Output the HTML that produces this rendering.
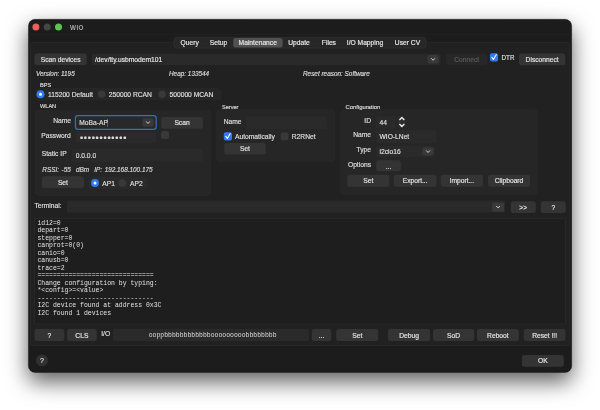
<!DOCTYPE html>
<html><head><meta charset="utf-8"><title>WIO</title>
<style>
html,body{margin:0;padding:0;background:#fff;}
body{width:600px;height:410px;position:relative;overflow:hidden;font-family:"Liberation Sans",sans-serif;font-size:6.7px;color:#dcdcdc;}
.a{position:absolute;box-sizing:border-box;white-space:nowrap;-webkit-text-stroke:0.18px currentColor;}
.bt{text-align:center;color:#e2e2e2;line-height:10px;}
.lbl{color:#dedede;}
.sm{font-size:5.6px;color:#d8d8d8;}
.it{font-style:italic;font-size:6.4px;color:#d8d8d8;}
.mono{font-family:"Liberation Mono",monospace;font-size:6.46px;color:#e2e2e2;-webkit-text-stroke:0;}
</style></head><body>
<div id="root" class="a" style="left:0;top:0;width:600px;height:410px;will-change:transform;">
<div class="a" style="left:30px;top:21px;width:540px;height:350px;border-radius:5px;background:#1c1c1c;box-shadow:0 9px 21px 2px rgba(0,0,0,.62);"></div>
<svg class="a" style="left:0;top:0" width="600" height="410" viewBox="0 0 600 410">
<rect x="28.4" y="19.3" width="543.3" height="353.1" rx="6.5" fill="#1c1c1c" stroke="rgba(0,0,0,0.55)" stroke-width="0.6"/>
<rect x="28.3" y="34" width="543.5" height="0.7" rx="0" fill="#232323"/>
<circle cx="35.9" cy="27.1" r="3.5" fill="#ec5f5a"/>
<circle cx="47.2" cy="27.1" r="3.5" fill="#464646"/>
<circle cx="58.5" cy="27.1" r="3.5" fill="#5ec353"/>
<rect x="30.5" y="42.3" width="539" height="303.2" rx="3" fill="#212121" stroke="#2f2f2f" stroke-width="0.6"/>
<rect x="174" y="37.2" width="252" height="10.9" rx="3" fill="#272727" stroke="#383838" stroke-width="0.5"/>
<rect x="233.2" y="38" width="49.5" height="9.6" rx="2.5" fill="#515151"/>
<rect x="34.5" y="53.4" width="52.25" height="11.7" rx="2.5" fill="#343434"/>
<rect x="92" y="53.8" width="348.5" height="11.1" rx="1.5" fill="#2a2a2a"/>
<rect x="427.6" y="55" width="11" height="8.4" rx="2" fill="#393939"/>
<path d="M431.5 58.55 L433.1 60.25 L434.7 58.55" fill="none" stroke="#e0e0e0" stroke-width="0.9" stroke-linecap="round" stroke-linejoin="round"/>
<rect x="446" y="53.5" width="41.5" height="11.7" rx="2.5" fill="#272727"/>
<rect x="489.9" y="53.2" width="8.2" height="8.2" rx="2" fill="#2f7bf6"/>
<path d="M491.9 57.4 L493.4 59.5 L496.25 54.7" fill="none" stroke="#fff" stroke-width="1.1" stroke-linecap="round" stroke-linejoin="round"/>
<rect x="519" y="53.5" width="46.3" height="11.7" rx="2.5" fill="#343434"/>
<rect x="35.5" y="88.5" width="185.5" height="11.5" rx="4" fill="#262626" stroke="#2b2b2b" stroke-width="0.5"/>
<circle cx="40.5" cy="94.25" r="3.95" fill="#2f7bf6"/><circle cx="40.5" cy="94.25" r="1.5" fill="#fff"/>
<circle cx="101.75" cy="94.25" r="3.8" fill="#393939"/>
<circle cx="162" cy="94.25" r="3.8" fill="#393939"/>
<rect x="35" y="110" width="176" height="85.7" rx="4" fill="#262626" stroke="#2b2b2b" stroke-width="0.5"/>
<rect x="74.8" y="115" width="82" height="14.9" rx="3.2" fill="#3470b8"/>
<rect x="76.05" y="116.25" width="79.5" height="12.4" rx="2" fill="#292929"/>
<rect x="107.1" y="118.9" width="0.7" height="7.8" rx="0" fill="#3f86f7"/>
<rect x="142.4" y="118.3" width="11.2" height="8.5" rx="2" fill="#393939"/>
<path d="M146.4 121.75 L148 123.45 L149.6 121.75" fill="none" stroke="#e0e0e0" stroke-width="0.9" stroke-linecap="round" stroke-linejoin="round"/>
<rect x="161.1" y="117.1" width="41.9" height="11.7" rx="2.5" fill="#343434"/>
<rect x="75.7" y="131.7" width="80.3" height="11.6" rx="1.5" fill="#2a2a2a"/>
<rect x="161" y="131" width="8" height="8" rx="2" fill="#393939"/>
<rect x="71.7" y="149" width="131" height="12.7" rx="1.5" fill="#2a2a2a"/>
<rect x="41.9" y="176.2" width="42.1" height="11.8" rx="2.5" fill="#343434"/>
<rect x="88.3" y="176.7" width="59.4" height="12.3" rx="4" fill="#2a2a2a" stroke="#2b2b2b" stroke-width="0.5"/>
<circle cx="95" cy="183" r="3.95" fill="#2f7bf6"/><circle cx="95" cy="183" r="1.5" fill="#fff"/>
<circle cx="122.3" cy="183" r="3.8" fill="#393939"/>
<rect x="216.25" y="109.5" width="118.75" height="52.5" rx="4" fill="#262626" stroke="#2b2b2b" stroke-width="0.5"/>
<rect x="246.25" y="116.25" width="80.5" height="13" rx="1.5" fill="#2a2a2a"/>
<rect x="223.8" y="132.2" width="8.2" height="8.2" rx="2" fill="#2f7bf6"/>
<path d="M225.8 136.4 L227.3 138.5 L230.15 133.7" fill="none" stroke="#fff" stroke-width="1.1" stroke-linecap="round" stroke-linejoin="round"/>
<rect x="280.7" y="132.4" width="7.8" height="7.8" rx="2" fill="#393939"/>
<rect x="224.2" y="142.9" width="41.55" height="11.7" rx="2.5" fill="#343434"/>
<rect x="340.25" y="109.7" width="197.75" height="84.7" rx="4" fill="#262626" stroke="#2b2b2b" stroke-width="0.5"/>
<rect x="376.3" y="116.3" width="19.7" height="12.4" rx="1.5" fill="#2a2a2a"/>
<rect x="398" y="115.8" width="7.7" height="12.2" rx="2.5" fill="#2c2c2c"/>
<path d="M399.7 119.7 L401.85 117.5 L404 119.7" fill="none" stroke="#f2f2f2" stroke-width="1.25" stroke-linecap="round" stroke-linejoin="round"/>
<path d="M399.7 124.3 L401.85 126.5 L404 124.3" fill="none" stroke="#f2f2f2" stroke-width="1.25" stroke-linecap="round" stroke-linejoin="round"/>
<rect x="376.3" y="130" width="60.2" height="13" rx="1.5" fill="#2a2a2a"/>
<rect x="376.3" y="145.75" width="58.45" height="11.55" rx="1.5" fill="#2a2a2a"/>
<rect x="422.5" y="147.5" width="11.2" height="8" rx="2" fill="#393939"/>
<path d="M426.5 150.75 L428.1 152.45 L429.7 150.75" fill="none" stroke="#e0e0e0" stroke-width="0.9" stroke-linecap="round" stroke-linejoin="round"/>
<rect x="376.3" y="160.2" width="24.5" height="11.1" rx="2.5" fill="#343434"/>
<rect x="347.25" y="174.8" width="42" height="11.9" rx="2.5" fill="#343434"/>
<rect x="393.8" y="174.8" width="42.7" height="11.9" rx="2.5" fill="#343434"/>
<rect x="440.7" y="174.8" width="42.3" height="11.9" rx="2.5" fill="#343434"/>
<rect x="488" y="174.8" width="42" height="11.9" rx="2.5" fill="#343434"/>
<rect x="67" y="200.5" width="438" height="12" rx="1.5" fill="#2a2a2a"/>
<rect x="492" y="202.5" width="12.25" height="9.25" rx="2" fill="#393939"/>
<path d="M496.5 206.25 L498.1 207.95 L499.7 206.25" fill="none" stroke="#e0e0e0" stroke-width="0.9" stroke-linecap="round" stroke-linejoin="round"/>
<rect x="510.75" y="201.25" width="25" height="11.75" rx="2.5" fill="#343434"/>
<rect x="540.75" y="201.25" width="25" height="11.75" rx="2.5" fill="#343434"/>
<rect x="34.5" y="218.25" width="531.25" height="105.75" rx="0" fill="#1e1e1e" stroke="#303030" stroke-width="0.5"/>
<rect x="34.5" y="329" width="29.75" height="12" rx="2.5" fill="#343434"/>
<rect x="67" y="329" width="29.75" height="12" rx="2.5" fill="#343434"/>
<rect x="113" y="329.1" width="196.25" height="12" rx="1.5" fill="#2a2a2a"/>
<rect x="311.75" y="329" width="19.5" height="12" rx="2.5" fill="#343434"/>
<rect x="336.25" y="329" width="42" height="12" rx="2.5" fill="#343434"/>
<rect x="388" y="329" width="42" height="12" rx="2.5" fill="#343434"/>
<rect x="433" y="329" width="41.25" height="12" rx="2.5" fill="#343434"/>
<rect x="477" y="329" width="41.75" height="12" rx="2.5" fill="#343434"/>
<rect x="523.75" y="329" width="41.75" height="12" rx="2.5" fill="#343434"/>
<circle cx="42" cy="360.5" r="6" fill="#303030"/>
<rect x="522" y="355" width="41.75" height="11.75" rx="2.5" fill="#343434"/>
</svg>
<div class="a lbl" style="left:70px;top:22.9px;line-height:10px;font-weight:bold;font-size:6.3px;letter-spacing:0.45px;color:#a8a8a8;-webkit-text-stroke:0;">WIO</div>
<div class="a lbl" style="left:159.7px;width:60px;text-align:center;top:37.8px;line-height:10px;color:#e6e6e6;">Query</div>
<div class="a lbl" style="left:188.5px;width:60px;text-align:center;top:37.8px;line-height:10px;color:#e6e6e6;">Setup</div>
<div class="a lbl" style="left:227.75px;width:60px;text-align:center;top:37.8px;line-height:10px;color:#e6e6e6;">Maintenance</div>
<div class="a lbl" style="left:269px;width:60px;text-align:center;top:37.8px;line-height:10px;color:#e6e6e6;">Update</div>
<div class="a lbl" style="left:298.9px;width:60px;text-align:center;top:37.8px;line-height:10px;color:#e6e6e6;">Files</div>
<div class="a lbl" style="left:335px;width:60px;text-align:center;top:37.8px;line-height:10px;color:#e6e6e6;">I/O Mapping</div>
<div class="a lbl" style="left:377.5px;width:60px;text-align:center;top:37.8px;line-height:10px;color:#e6e6e6;">User CV</div>
<div class="a bt" style="left:34.5px;top:54.8px;width:52.25px;">Scan devices</div>
<div class="a lbl" style="left:95px;top:54.5px;line-height:10px;color:#e4e4e4;">/dev/tty.usbmodem101</div>
<div class="a bt" style="left:446px;top:54.5px;width:41.5px;color:#5a5a5a;">Connect</div>
<div class="a lbl" style="left:501.5px;top:52.6px;line-height:10px;font-size:6.3px;">DTR</div>
<div class="a bt" style="left:519px;top:54.5px;width:46.3px;">Disconnect</div>
<div class="a it" style="left:36px;top:68.9px;line-height:10px;">Version: 1195</div>
<div class="a it" style="left:169px;top:68.9px;line-height:10px;">Heap: 133544</div>
<div class="a it" style="left:303px;top:68.9px;line-height:10px;">Reset reason: Software</div>
<div class="a sm" style="left:40px;top:80.4px;line-height:10px;">BPS</div>
<div class="a lbl" style="left:48px;top:90.1px;line-height:10px;">115200 Default</div>
<div class="a lbl" style="left:108.75px;top:90.1px;line-height:10px;">250000 RCAN</div>
<div class="a lbl" style="left:169.5px;top:90.1px;line-height:10px;">500000 MCAN</div>
<div class="a sm" style="left:40px;top:101px;line-height:10px;">WLAN</div>
<div class="a lbl" style="right:529px;top:115.9px;line-height:10px;">Name</div>
<div class="a lbl" style="left:79.3px;top:117.5px;line-height:10px;">MoBa-AP</div>
<div class="a bt" style="left:161.1px;top:118.1px;width:41.9px;">Scan</div>
<div class="a lbl" style="right:529.3px;top:130.7px;line-height:10px;">Password</div>
<div class="a lbl" style="left:79.9px;top:132.8px;line-height:10px;font-size:9px;letter-spacing:0.78px;">&bull;&bull;&bull;&bull;&bull;&bull;&bull;&bull;&bull;&bull;&bull;&bull;</div>
<div class="a lbl" style="left:41.7px;top:149.1px;line-height:10px;">Static IP</div>
<div class="a lbl" style="left:75.7px;top:150.7px;line-height:10px;">0.0.0.0</div>
<div class="a it" style="left:42.3px;top:165.4px;line-height:10px;word-spacing:0.8px;">RSSI: -55&nbsp; dBm&nbsp; IP: 192.168.100.175</div>
<div class="a bt" style="left:41.9px;top:177.65px;width:42.1px;">Set</div>
<div class="a lbl" style="left:102.3px;top:178.9px;line-height:10px;">AP1</div>
<div class="a lbl" style="left:130px;top:178.9px;line-height:10px;">AP2</div>
<div class="a sm" style="left:222px;top:102px;line-height:10px;">Server</div>
<div class="a lbl" style="left:223.75px;top:116.5px;line-height:10px;">Name</div>
<div class="a lbl" style="left:235px;top:132.1px;line-height:10px;">Automatically</div>
<div class="a lbl" style="left:291.75px;top:132.1px;line-height:10px;">R2RNet</div>
<div class="a bt" style="left:224.2px;top:143.9px;width:41.55px;">Set</div>
<div class="a sm" style="left:345.5px;top:101.5px;line-height:10px;font-size:5.85px;">Configuration</div>
<div class="a lbl" style="right:229px;top:115.5px;line-height:10px;">ID</div>
<div class="a lbl" style="left:379.5px;top:118.1px;line-height:10px;">44</div>
<div class="a lbl" style="right:229px;top:129.5px;line-height:10px;">Name</div>
<div class="a lbl" style="left:379.5px;top:132.1px;line-height:10px;">WIO-LNet</div>
<div class="a lbl" style="right:229px;top:145px;line-height:10px;">Type</div>
<div class="a lbl" style="left:379.5px;top:146.9px;line-height:10px;">i2cio16</div>
<div class="a lbl" style="right:229px;top:159.8px;line-height:10px;">Options</div>
<div class="a bt" style="left:376.3px;top:161.7px;width:24.5px;">...</div>
<div class="a bt" style="left:347.25px;top:175.9px;width:42px;">Set</div>
<div class="a bt" style="left:393.8px;top:175.9px;width:42.7px;">Export...</div>
<div class="a bt" style="left:440.7px;top:175.9px;width:42.3px;">Import...</div>
<div class="a bt" style="left:488px;top:175.9px;width:42px;">Clipboard</div>
<div class="a lbl" style="left:34.5px;top:200.5px;line-height:10px;">Terminal:</div>
<div class="a bt" style="left:510.75px;top:203.175px;width:25px;">&gt;&gt;</div>
<div class="a bt" style="left:540.75px;top:203.175px;width:25px;">?</div>
<div class="a mono" style="left:37.5px;top:219.8px;line-height:7.5px;">id12=0<br>depart=0<br>stepper=0<br>canprot=0(0)<br>canio=0<br>canusb=0<br>trace=2<br>==============================<br>Change configuration by typing:<br>*&lt;config&gt;=&lt;value&gt;<br>------------------------------<br>I2C device found at address 0x3C<br>I2C found 1 devices</div>
<div class="a bt" style="left:34.5px;top:330.95px;width:29.75px;">?</div>
<div class="a bt" style="left:67px;top:330.95px;width:29.75px;">CLS</div>
<div class="a lbl" style="left:101.25px;top:329.2px;line-height:10px;">I/O</div>
<div class="a mono" style="left:148.75px;top:331px;line-height:10px;color:#dcdcdc;">ooppbbbbbbbbbbbbooooooooobbbbbbbb</div>
<div class="a bt" style="left:311.75px;top:330.95px;width:19.5px;">...</div>
<div class="a bt" style="left:336.25px;top:330.95px;width:42px;">Set</div>
<div class="a bt" style="left:388px;top:330.95px;width:42px;">Debug</div>
<div class="a bt" style="left:433px;top:330.95px;width:41.25px;">SoD</div>
<div class="a bt" style="left:477px;top:330.95px;width:41.75px;">Reboot</div>
<div class="a bt" style="left:523.75px;top:330.95px;width:41.75px;">Reset !!!</div>
<div class="a lbl" style="left:32px;width:20px;text-align:center;top:355.6px;line-height:10px;font-size:7px;">?</div>
<div class="a bt" style="left:522px;top:356.025px;width:41.75px;">OK</div>
</div>
</body></html>
